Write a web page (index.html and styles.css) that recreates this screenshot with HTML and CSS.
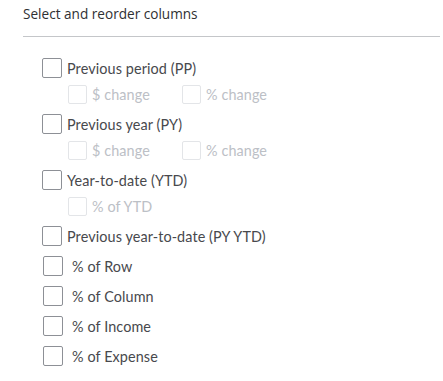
FILE: index.html
```html
<!DOCTYPE html>
<html lang="en">
<head>
  <meta charset="UTF-8" />
  <meta name="viewport" content="width=device-width, initial-scale=1.0"/>
  <title>Select and reorder columns</title>
  <link rel="stylesheet" href="styles.css">
</head>
<body>
  <div class="panel">
    <h2 class="title">Select and reorder columns</h2>

    <ul class="columns">
      <li class="row">
        <label class="opt"><span class="box"></span>Previous period (PP)</label>
      </li>
      <li class="row sub">
        <label class="opt off"><span class="box"></span>$ change</label>
        <label class="opt off"><span class="box"></span>% change</label>
      </li>

      <li class="row">
        <label class="opt"><span class="box"></span>Previous year (PY)</label>
      </li>
      <li class="row sub">
        <label class="opt off"><span class="box"></span>$ change</label>
        <label class="opt off"><span class="box"></span>% change</label>
      </li>

      <li class="row">
        <label class="opt"><span class="box"></span>Year-to-date (YTD)</label>
      </li>
      <li class="row sub">
        <label class="opt off"><span class="box"></span>% of YTD</label>
      </li>

      <li class="row">
        <label class="opt"><span class="box"></span>Previous year-to-date (PY YTD)</label>
      </li>
      <li class="row">
        <label class="opt wide"><span class="box"></span>% of Row</label>
      </li>
      <li class="row">
        <label class="opt wide"><span class="box"></span>% of Column</label>
      </li>
      <li class="row">
        <label class="opt wide"><span class="box"></span>% of Income</label>
      </li>
      <li class="row">
        <label class="opt wide"><span class="box"></span>% of Expense</label>
      </li>
    </ul>
  </div>
</body>
</html>
```

FILE: styles.css
```css
body {
  margin: 0;
  background: #fff;
  font-family: Lato, "Open Sans", sans-serif;
  color: #48494d;
}
.panel {
  padding: 0 3px 0 23px;
}
.title {
  margin: 0;
  padding-top: 5px;
  height: 31px;
  font-family: "Open Sans", sans-serif;
  font-size: 13.6px;
  font-weight: normal;
  line-height: 18px;
  color: #2f3033;
  border-bottom: 1px solid #c4c6c9;
}
.columns {
  list-style: none;
  margin: 0;
  padding: 16px 0 0 19px;
}
.row {
  display: flex;
  align-items: center;
  height: 30px;
}
.row.sub {
  height: 22px;
  padding: 0 0 4px 26px;
  display: grid;
  grid-template-columns: 114px auto;
  align-items: center;
}
.opt {
  display: flex;
  align-items: center;
  gap: 5px;
  font-size: 14.4px;
  letter-spacing: 0.1px;
  cursor: pointer;
}
.opt.wide {
  gap: 9px;
  padding-left: 1px;
}
.box {
  width: 18px;
  height: 18px;
  border: 1px solid #8d9096;
  border-radius: 2px;
  background: #fff;
}
.opt.off {
  color: #bcc0c6;
  cursor: default;
}
.opt.off .box {
  width: 17px;
  height: 17px;
  border-color: #e3e5e8;
}
```
